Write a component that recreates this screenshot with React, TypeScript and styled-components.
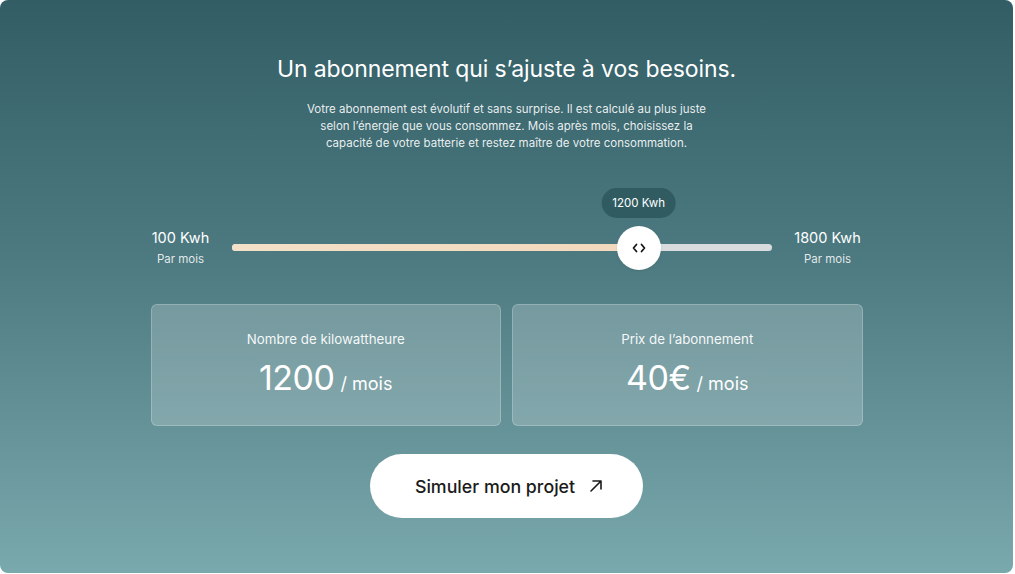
import React from "react";
import styled, { createGlobalStyle } from "styled-components";

const GlobalStyle = createGlobalStyle`
  html, body {
    margin: 0;
    padding: 0;
    background: #ffffff;
  }
  body {
    font-family: Inter, "Noto Sans", sans-serif;
    -webkit-font-smoothing: antialiased;
  }
`;

const Panel = styled.section`
  width: 1013px;
  height: 573px;
  border-radius: 8px;
  background: linear-gradient(180deg, #325d65 0%, #4d7a80 45%, #79a8ad 100%);
  display: flex;
  flex-direction: column;
  align-items: center;
  box-sizing: border-box;
  padding-top: 53px;
  color: #ffffff;
`;

const Title = styled.h1`
  margin: 0;
  font-size: 23px;
  font-weight: 400;
  letter-spacing: -0.1px;
  line-height: 32px;
`;

const Intro = styled.p`
  margin: 16px 0 0;
  width: 412px;
  text-align: center;
  font-size: 11.5px;
  line-height: 17px;
  color: rgba(255, 255, 255, 0.9);
`;

const SliderRow = styled.div`
  margin-top: 36px;
  width: 712px;
  display: flex;
  align-items: flex-end;
  gap: 21px;
`;

const Bound = styled.div<{ $width: number }>`
  display: flex;
  flex-direction: column;
  align-items: center;
  width: ${(p) => p.$width}px;
  flex: none;
  padding-bottom: 3px;
  white-space: nowrap;
`;

const BoundValue = styled.span`
  font-size: 14.5px;
  font-weight: 400;
  line-height: 18px;
`;

const BoundCaption = styled.span`
  font-size: 11.5px;
  line-height: 14px;
  margin-top: 5px;
  color: rgba(255, 255, 255, 0.85);
`;

const SliderArea = styled.div`
  flex: 1;
  display: flex;
  flex-direction: column;
`;

const TooltipLane = styled.div`
  position: relative;
  height: 30px;
  margin-bottom: 8px;
`;

const Tooltip = styled.div`
  position: absolute;
  top: 0;
  transform: translateX(-50%);
  height: 30px;
  padding: 0 11px;
  box-sizing: border-box;
  border-radius: 15px;
  background: #2f5b61;
  display: flex;
  align-items: center;
  font-size: 11.5px;
  font-weight: 400;
  white-space: nowrap;
`;

const Track = styled.div`
  position: relative;
  height: 7px;
  border-radius: 4px;
  background: #d8dcdf;
  margin: 18px 0 18px;
`;

const Fill = styled.div`
  position: absolute;
  left: 0;
  top: 0;
  bottom: 0;
  border-radius: 4px;
  background: linear-gradient(90deg, #f3e0c8 0%, #f2d9bd 100%);
`;

const Thumb = styled.div`
  position: absolute;
  top: 50%;
  width: 44px;
  height: 44px;
  border-radius: 50%;
  background: #ffffff;
  transform: translate(-50%, -50%);
  display: flex;
  align-items: center;
  justify-content: center;
  box-shadow: 0 1px 3px rgba(0, 0, 0, 0.08);
`;

const Cards = styled.div`
  margin-top: 35px;
  width: 712px;
  display: grid;
  grid-template-columns: 1fr 1fr;
  gap: 11px;
`;

const Card = styled.div`
  height: 122px;
  box-sizing: border-box;
  border-radius: 6px;
  border: 1px solid rgba(255, 255, 255, 0.22);
  background: rgba(255, 255, 255, 0.2);
  display: flex;
  flex-direction: column;
  align-items: center;
  padding-top: 26px;
`;

const CardLabel = styled.span`
  font-size: 13.3px;
  line-height: 16px;
  color: rgba(255, 255, 255, 0.95);
`;

const CardValue = styled.div`
  margin-top: 9px;
  display: flex;
  align-items: baseline;
  gap: 6px;
`;

const Big = styled.span`
  font-size: 34px;
  line-height: 44px;
  letter-spacing: -0.5px;
`;

const Unit = styled.span`
  font-size: 18px;
`;

const CtaButton = styled.button`
  margin-top: 28px;
  width: 273px;
  height: 64px;
  border: none;
  border-radius: 32px;
  background: #ffffff;
  color: #1b1b1b;
  font-family: Inter, "Noto Sans", sans-serif;
  font-size: 17.8px;
  font-weight: 500;
  display: flex;
  align-items: center;
  justify-content: center;
  gap: 13px;
  cursor: pointer;
  padding: 0 0 0 6px;
`;

const App = () => {
  const [value] = React.useState(1200);
  // position of the thumb on the track, as in the design
  const pct = 75.4;
  const price = Math.round(value / 30);

  return (
    <>
      <GlobalStyle />
      <Panel>
        <Title>Un abonnement qui s’ajuste à vos besoins.</Title>
        <Intro>
          Votre abonnement est évolutif et sans surprise. Il est calculé au plus
          juste selon l’énergie que vous consommez. Mois après mois, choisissez
          la capacité de votre batterie et restez maître de votre consommation.
        </Intro>

        <SliderRow>
          <Bound $width={60}>
            <BoundValue>100 Kwh</BoundValue>
            <BoundCaption>Par mois</BoundCaption>
          </Bound>
          <SliderArea>
            <TooltipLane>
              <Tooltip style={{ left: `${pct}%` }}>{value} Kwh</Tooltip>
            </TooltipLane>
            <Track>
              <Fill style={{ width: `${pct}%` }} />
              <Thumb style={{ left: `${pct}%` }}>
                <svg width="14" height="10" viewBox="0 0 14 10" fill="none">
                  <path
                    d="M4.5 1.5 1.5 5l3 3.5M9.5 1.5 12.5 5l-3 3.5"
                    stroke="#111"
                    strokeWidth="1.7"
                    strokeLinecap="round"
                    strokeLinejoin="round"
                  />
                </svg>
              </Thumb>
            </Track>
          </SliderArea>
          <Bound $width={70}>
            <BoundValue>1800 Kwh</BoundValue>
            <BoundCaption>Par mois</BoundCaption>
          </Bound>
        </SliderRow>

        <Cards>
          <Card>
            <CardLabel>Nombre de kilowattheure</CardLabel>
            <CardValue>
              <Big>{value}</Big>
              <Unit>/ mois</Unit>
            </CardValue>
          </Card>
          <Card>
            <CardLabel>Prix de l’abonnement</CardLabel>
            <CardValue>
              <Big>{price}€</Big>
              <Unit>/ mois</Unit>
            </CardValue>
          </Card>
        </Cards>

        <CtaButton>
          Simuler mon projet
          <svg width="16" height="16" viewBox="0 0 16 16" fill="none">
            <path
              d="M3 13 13 3M5 3h8v8"
              stroke="#1b1b1b"
              strokeWidth="1.6"
              strokeLinecap="round"
              strokeLinejoin="round"
            />
          </svg>
        </CtaButton>
      </Panel>
    </>
  );
};

export default App;
